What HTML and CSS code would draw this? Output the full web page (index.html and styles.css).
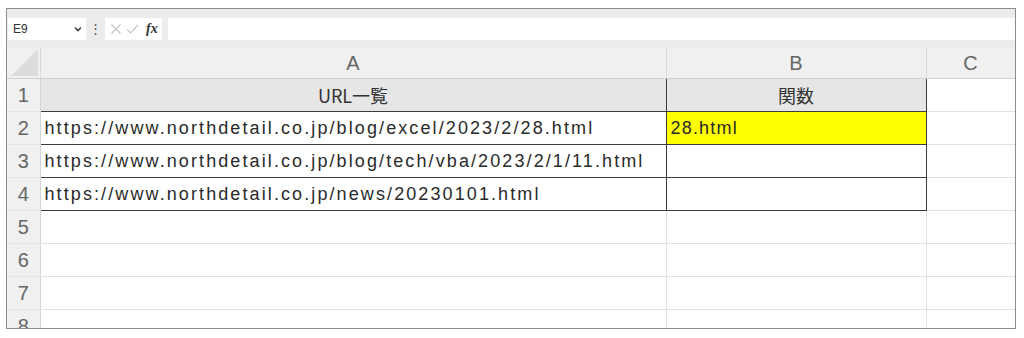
FILE: index.html
```html
<!DOCTYPE html>
<html lang="ja">
<head>
    <meta charset="UTF-8">
    <meta name="viewport" content="width=device-width, initial-scale=1.0">
    <title>URL一覧</title>
    <link rel="stylesheet" href="styles.css">
</head>
<body>
    <div class="sheet-window">
        <div class="formula-bar">
            <div class="name-box">
                <span>E9</span>
                <svg class="chevron" width="8" height="6" viewBox="0 0 8 6"><path d="M1 1.5 L4 4.5 L7 1.5" fill="none" stroke="#444" stroke-width="1.6"/></svg>
            </div>
            <span class="dots">&#8942;</span>
            <div class="fx-box">
                <svg width="12" height="12" viewBox="0 0 12 12"><path d="M1.5 1.5 L10.5 10.5 M10.5 1.5 L1.5 10.5" stroke="#c4c4c4" stroke-width="1.1"/></svg>
                <svg width="13" height="12" viewBox="0 0 13 12"><path d="M1 6.5 L4.5 10 L12 2" fill="none" stroke="#c4c4c4" stroke-width="1.1"/></svg>
                <span class="fx">fx</span>
            </div>
            <div class="formula-input"></div>
        </div>

        <table class="grid">
            <colgroup>
                <col class="col-head">
                <col class="col-a">
                <col class="col-b">
                <col class="col-c">
            </colgroup>
            <thead>
                <tr>
                    <th class="corner"><div class="triangle"></div></th>
                    <th>A</th>
                    <th>B</th>
                    <th>C</th>
                </tr>
            </thead>
            <tbody>
                <tr>
                    <th>1</th>
                    <td class="title box">URL一覧</td>
                    <td class="title box">関数</td>
                    <td></td>
                </tr>
                <tr>
                    <th>2</th>
                    <td class="box">https://www.northdetail.co.jp/blog/excel/2023/2/28.html</td>
                    <td class="box result">28.html</td>
                    <td></td>
                </tr>
                <tr>
                    <th>3</th>
                    <td class="box">https://www.northdetail.co.jp/blog/tech/vba/2023/2/1/11.html</td>
                    <td class="box"></td>
                    <td></td>
                </tr>
                <tr>
                    <th>4</th>
                    <td class="box">https://www.northdetail.co.jp/news/20230101.html</td>
                    <td class="box"></td>
                    <td></td>
                </tr>
                <tr><th>5</th><td></td><td></td><td></td></tr>
                <tr><th>6</th><td></td><td></td><td></td></tr>
                <tr><th>7</th><td></td><td></td><td></td></tr>
                <tr><th>8</th><td></td><td></td><td></td></tr>
            </tbody>
        </table>
    </div>
</body>
</html>
```

FILE: styles.css
```css
body {
    margin: 0;
    background-color: white;
    font-family: "Liberation Sans", "Noto Sans CJK JP", sans-serif;
}
.sheet-window {
    margin: 8px 0 0 6px;
    width: 1008px;
    height: 319px;
    border: 1px solid #8c8c8c;
    background-color: #f0f0f0;
    overflow: hidden;
}
.formula-bar {
    display: flex;
    align-items: center;
    height: 39px;
    padding: 0 0 0 1px;
    background-color: #ececec;
    box-sizing: border-box;
}
.name-box {
    display: flex;
    align-items: center;
    justify-content: space-between;
    width: 78px;
    height: 22px;
    padding: 0 4px 0 5px;
    box-sizing: border-box;
    background-color: white;
    font-size: 12px;
    color: #333;
}
.dots {
    width: 19px;
    text-align: center;
    font-size: 13px;
    color: #555;
}
.fx-box {
    display: flex;
    align-items: center;
    gap: 4px;
    width: 57px;
    height: 22px;
    padding-left: 5px;
    box-sizing: border-box;
    background-color: white;
}
.fx {
    margin-left: 3px;
    font-family: "Liberation Serif", serif;
    font-style: italic;
    font-weight: bold;
    font-size: 14px;
    color: #333;
}
.formula-input {
    flex: 1;
    height: 22px;
    margin-left: 6px;
    background-color: white;
}
.grid {
    border-collapse: collapse;
    table-layout: fixed;
    width: 1008px;
}
.col-head { width: 33px; }
.col-a { width: 626px; }
.col-b { width: 260px; }
.col-c { width: 89px; }
th {
    font-weight: normal;
    color: #666;
    font-size: 20px;
    background-color: #f0f0f0;
}
thead th {
    height: 30px;
    padding: 0;
    border-right: 1px solid #dadada;
    border-bottom: 1px solid #cfcfcf;
}
.corner {
    vertical-align: bottom;
}
.triangle {
    width: 0;
    height: 0;
    margin: 0 2px 2px auto;
    border-left: 27px solid transparent;
    border-bottom: 27px solid #dcdcdc;
}
tbody th {
    height: 32px;
    padding: 0;
    border-right: 1px solid #d4d4d4;
    border-bottom: 1px solid #e6e6e6;
    text-align: center;
}
td {
    height: 32px;
    padding: 0 4px;
    background-color: white;
    border-right: 1px solid #e1e1e1;
    border-bottom: 1px solid #e1e1e1;
    font-size: 18px;
    letter-spacing: 2.1px;
    color: #2a2a2a;
    white-space: nowrap;
    overflow: hidden;
}
td.box {
    border: 1px solid #3c3c3c;
}
td.title {
    background-color: #e7e6e6;
    text-align: center;
    color: #333;
    border-top-color: #cfcfcf;
    font-family: "Noto Sans CJK JP", sans-serif;
    letter-spacing: 0;
}
td.result {
    background-color: #ffff00;
    letter-spacing: 1.2px;
}
```
